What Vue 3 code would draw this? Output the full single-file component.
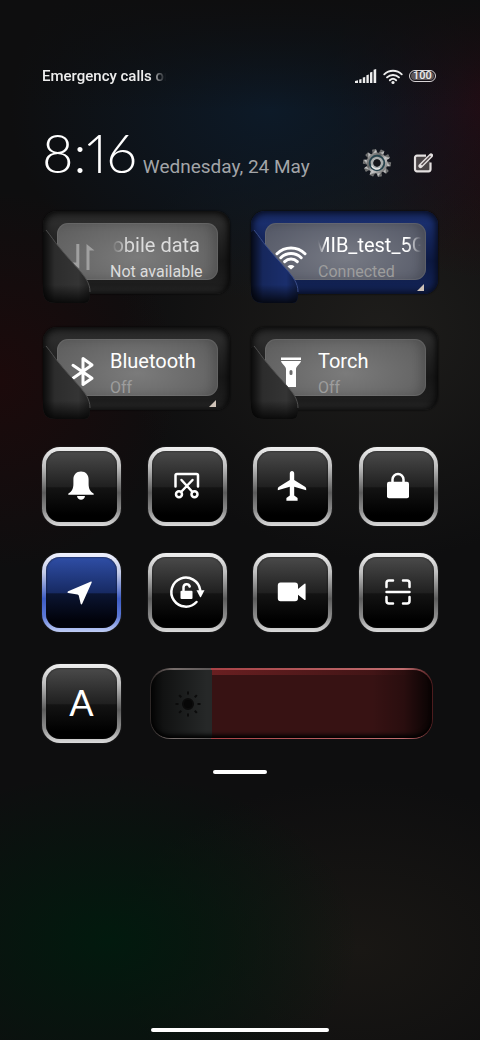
<template>
  <main class="control-center">
    <!-- Status bar -->
    <header class="status-bar">
      <span class="carrier">Emergency calls only</span>
      <div class="status-icons">
        <svg width="22" height="14" viewBox="0 0 22 14" role="img" aria-label="Signal">
          <path d="M0 12L3 11.2V14H0zM4.200 10.600L6.500 10V14H4.200zM7.800 8.600L10.200 8v6H7.800zM11.400 6.200L13.800 5.500V14h-2.400zM15 3.500L17.400 2.800V14H15zM18.600 .8L21.200 0v14h-2.600z" fill="#eee" />
        </svg>
        <svg width="20" height="15" viewBox="0 0 32 24" role="img" aria-label="Wi-Fi">
          <path d="M2 8.500a20 20 0 0 1 28 0M6.500 13.500a13.500 13.500 0 0 1 19 0M11 18a7.500 7.500 0 0 1 10 0" fill="none" stroke="#eee" stroke-width="3" stroke-linecap="round" />
          <circle cx="16" cy="21.500" r="2.500" fill="#eee" />
        </svg>
        <span class="battery"><span>100</span></span>
      </div>
    </header>

    <!-- Clock -->
    <section class="clock-row">
      <time class="clock">8:16</time>
      <span class="date">Wednesday, 24 May</span>
      <div class="actions">
        <button type="button" aria-label="Settings">
          <svg width="30" height="30" viewBox="-15 -15 30 30">
            <defs>
              <linearGradient id="steel" x1="0" y1="0" x2="1" y2="1">
                <stop offset="0" stop-color="#9a9a9a" />
                <stop offset="0.35" stop-color="#5f6060" />
                <stop offset="0.6" stop-color="#c9c9c9" />
                <stop offset="1" stop-color="#6d6d6d" />
              </linearGradient>
            </defs>
            <g fill="url(#steel)">
              <path v-for="n in 10" :key="n" d="M-2.600 -9L-1.900 -14H1.900L2.600 -9z" :transform="`rotate(${n * 36 - 12})`" />
            </g>
            <circle r="8.500" fill="none" stroke="url(#steel)" stroke-width="4" />
            <circle r="7.300" fill="none" stroke="#24424c" stroke-width="1.800" />
            <circle r="5" fill="none" stroke="#a9adad" stroke-width="2.600" />
            <path d="M-5.500 2.500A6 6 0 0 0 3 5.200" fill="none" stroke="#e8e8e8" stroke-width="1.500" />
            <circle r="3.400" fill="#15161a" />
          </svg>
        </button>
        <button type="button" aria-label="Edit">
          <svg width="20" height="20" viewBox="0 0 20 20">
            <path d="M17.500 9.500v6.800a2 2 0 0 1-2 2H4a2 2 0 0 1-2-2V4.600a2 2 0 0 1 2-2h9" fill="#4a4446" stroke="#e4e0e0" stroke-width="2.200" />
            <path d="M7.500 13L18 2.500" stroke="#e4e0e0" stroke-width="4.200" stroke-linecap="round" />
            <path d="M8.500 12L17.500 3" stroke="#55494c" stroke-width="1.500" />
          </svg>
        </button>
      </div>
    </section>

    <!-- Large tiles -->
    <section class="wide-grid">
      <button
        v-for="tile in wideTiles"
        :key="tile.id"
        type="button"
        class="wide-tile"
        :class="{ active: tile.active, muted: tile.muted }"
      >
        <span class="wide-body">
          <span class="panel">
            <svg class="wide-icon" width="32" height="32" viewBox="0 0 32 32">
              <path v-for="(s, i) in tile.icon" :key="i" :d="s.d" :class="s.line ? 'line' : 'solid'" />
            </svg>
            <span class="wide-text">
              <span class="title" :class="tile.scroll">{{ tile.title }}</span>
              <span class="state">{{ tile.state }}</span>
            </span>
          </span>
        </span>
        <svg class="flap" width="50" height="94" viewBox="0 0 50 94">
          <defs>
            <linearGradient :id="'side-' + tile.id" x1="0" y1="0" x2="1" y2="0">
              <stop offset="0" stop-color="#000" stop-opacity="0.800" />
              <stop offset="0.250" stop-color="#000" stop-opacity="0.150" />
              <stop offset="0.750" stop-color="#000" stop-opacity="0" />
              <stop offset="1" stop-color="#000" stop-opacity="0.400" />
            </linearGradient>
            <linearGradient :id="'fade-' + tile.id" x1="0" y1="0" x2="0" y2="1">
              <stop offset="0.750" stop-color="#000" stop-opacity="0" />
              <stop offset="1" stop-color="#000" stop-opacity="0.800" />
            </linearGradient>
          </defs>
          <path class="flap-base" :d="flapShape" />
          <path :d="flapShape" :fill="`url(#side-${tile.id})`" />
          <path :d="flapShape" :fill="`url(#fade-${tile.id})`" />
          <path class="flap-edge" d="M4 20C9 26 12 31 17 37C25 47 31 53 37 60C43 67 48 73 48 82" />
        </svg>
        <span v-if="tile.more" class="more"></span>
      </button>
    </section>

    <!-- Small toggles -->
    <section class="toggle-grid">
      <button
        v-for="item in toggles"
        :key="item.label"
        type="button"
        class="toggle"
        :class="{ active: item.active }"
        :aria-label="item.label"
      >
        <svg width="41" height="41" viewBox="0 0 41 41">
          <path v-for="(s, i) in item.icon" :key="i" :d="s.d" :class="s.line ? 'line' : 'solid'" />
        </svg>
      </button>
    </section>

    <!-- Brightness -->
    <section class="brightness-row">
      <button type="button" class="toggle auto" title="Automatic brightness">A</button>
      <label class="brightness">
        <input v-model="brightness" type="range" min="0" max="1000" aria-label="Brightness" :style="{ '--level': brightness / 10 + '%' }" />
        <svg class="sun" width="28" height="28" viewBox="-14 -14 28 28">
          <circle r="5" />
          <path v-for="n in 8" :key="n" d="M0 -9.500V-12.500" :transform="`rotate(${n * 45})`" />
        </svg>
      </label>
    </section>

    <div class="handle"></div>
    <div class="home-bar"></div>
  </main>
</template>

<script setup>
  import { ref } from 'vue'

  const brightness = ref(216)

  const flapShape = 'M4 20C9 26 12 31 17 37C25 47 31 53 37 60C43 67 48 73 48 82C48 88 48 93 42 93H14C5 93 1 89 1 80V22Z'

  const wideTiles = [
    {
      id: 'data',
      title: 'Mobile data',
      state: 'Not available',
      muted: true,
      scroll: 'scroll-start',
      icon: [
        { d: 'M9.300 3H12.300V27.500L4 21.500H9.300Z' },
        { d: 'M19.500 29V3L27.500 9.500H22.500V29Z' }
      ]
    },
    {
      id: 'wifi',
      title: 'MIB_test_5G',
      state: 'Connected',
      active: true,
      more: true,
      scroll: 'scroll-both',
      icon: [
        { d: 'M2 12.700A20 20 0 0 1 30 12.700M5.800 16.700A14.500 14.500 0 0 1 26.200 16.700M9.700 20.600A9 9 0 0 1 22.300 20.600', line: true },
        { d: 'M12.500 25.500A5 5 0 0 1 19.500 25.500L16 28.500Z' }
      ]
    },
    {
      id: 'bluetooth',
      title: 'Bluetooth',
      state: 'Off',
      more: true,
      icon: [{ d: 'M6 8.300L25 21.300L16 27.500V1.500L25 8L6 21.300', line: true }]
    },
    {
      id: 'torch',
      title: 'Torch',
      state: 'Off',
      icon: [{ d: 'M6 .5H26V3H6ZM6 4H26C25.500 7 21 9 21 12V30H11V12C11 9 6.500 7 6 4ZM16 13A1.500 1.500 0 0 0 14.500 14.500V16.500A1.500 1.500 0 0 0 17.500 16.500V14.500A1.500 1.500 0 0 0 16 13Z' }]
    }
  ]

  const toggles = [
    {
      label: 'Mute',
      icon: [
        { d: 'M20 5.500C24.800 5.500 27.600 8.800 27.600 13.500V18C27.600 23 29.500 25.500 32.500 27.500C33.200 28.200 33 28.700 32.200 28.700H7.800C7 28.700 6.800 28.200 7.500 27.500C10.500 25.500 12.400 23 12.400 18V13.500C12.400 8.800 15.200 5.500 20 5.500Z' },
        { d: 'M16 30H24C23.600 32.500 22 33.700 20 33.700C18 33.700 16.400 32.500 16 30Z' }
      ]
    },
    {
      label: 'Screenshot',
      icon: [
        { d: 'M8.500 20.500V9.500Q8.500 8 10 8H29.500Q31 8 31 9.500V20.500', line: true },
        { d: 'M14.500 14L25.500 26M25.500 14L14 26M15 28.300A3 3 0 1 1 9 28.300A3 3 0 1 1 15 28.300M30.500 28.300A3 3 0 1 1 24.500 28.300A3 3 0 1 1 30.500 28.300', line: true }
      ]
    },
    {
      label: 'Aeroplane mode',
      icon: [
        { d: 'M20 5C21.300 5 22.200 6 22.200 7.400V14L33 20.800C33.900 21.400 34.200 22 34.200 23V24.300L22.200 20.700V29.500L25.600 32V34.700H14.400V32L17.800 29.500V20.700L5.800 24.300V23C5.800 22 6.100 21.400 7 20.800L17.800 14V7.400C17.800 6 18.700 5 20 5Z' }
      ]
    },
    {
      label: 'Lock screen',
      icon: [
        { d: 'M11 15.700H29Q31 15.700 31 17.700V30.300Q31 32.300 29 32.300H11Q9 32.300 9 30.300V17.700Q9 15.700 11 15.700Z' },
        { d: 'M14.500 16V13.500A5.500 5.500 0 0 1 25.500 13.500V16', line: true }
      ]
    },
    {
      label: 'Location',
      active: true,
      icon: [
        { d: 'M29.500 9.700C30.500 9.300 31 9.800 30.600 10.800L21.200 31.800C20.700 32.800 19.900 32.700 19.600 31.600L17.800 23.800C17.600 23 17.200 22.700 16.500 22.500L7.300 21C6.200 20.800 6.200 19.800 7.200 19.300Z' }
      ]
    },
    {
      label: 'Rotation lock',
      icon: [
        { d: 'M33.200 18A14.500 14.500 0 1 0 29.500 30', line: true },
        { d: 'M29.500 18.200H37.500L34 25Q33.500 25.700 33 25Z' },
        { d: 'M14.500 18.800H24.500Q25.500 18.800 25.500 19.800V26Q25.500 27 24.500 27H14.500Q13.500 27 13.500 26V19.800Q13.500 18.800 14.500 18.800Z' },
        { d: 'M16.500 18.500V15A3.200 3.200 0 0 1 22.700 14.500', line: true }
      ]
    },
    {
      label: 'Screen recorder',
      icon: [
        { d: 'M8.500 10.500H23Q26 10.500 26 13.500V17L32.500 11.800Q33.600 11.200 33.600 12.500V27.200Q33.600 28.500 32.500 27.900L26 22.700V26.200Q26 29.200 23 29.200H8.500Q5.800 29.200 5.800 26.200V13.500Q5.800 10.500 8.500 10.500Z' }
      ]
    },
    {
      label: 'Scanner',
      icon: [
        { d: 'M8.500 15V11Q8.500 8.500 11 8.500H15M25 8.500H29Q31.500 8.500 31.500 11V15M8.500 25V29Q8.500 31.500 11 31.500H15M25 31.500H29Q31.500 31.500 31.500 29V25M8.500 20H31.500', line: true }
      ]
    }
  ]
</script>

<style>
  body {
    background: #0e0e0f;
  }
</style>

<style scoped>
  * {
    box-sizing: border-box;
  }

  .control-center {
    min-height: 100vh;
    padding: 66px 42px 8px;
    display: flex;
    flex-direction: column;
    font-family: Roboto, "Liberation Sans", sans-serif;
    color: #fff;
    background:
      linear-gradient(#0e0e0f 0, rgba(14, 14, 15, 0) 110px),
      radial-gradient(ellipse 260px 190px at 270px 110px, #0d1a28, rgba(13, 26, 40, 0)),
      radial-gradient(ellipse 150px 190px at 100% 90px, #260a10, rgba(38, 10, 16, 0)),
      radial-gradient(ellipse 180px 190px at 0 380px, #1c0a0b, rgba(28, 10, 11, 0)),
      radial-gradient(ellipse 260px 230px at 380px 330px, #1e1d1b, rgba(30, 29, 27, 0)),
      radial-gradient(ellipse 250px 170px at 110px 940px, #021a0e, rgba(2, 26, 14, 0)),
      radial-gradient(ellipse 250px 170px at 360px 950px, #191714, rgba(25, 23, 20, 0)),
      #0e0e0f;
  }

  button {
    margin: 0;
    padding: 0;
    border: 0;
    background: none;
    color: inherit;
    font: inherit;
    cursor: pointer;
  }

  /* Status bar */
  .status-bar {
    display: flex;
    align-items: center;
    justify-content: space-between;
    height: 20px;
  }

  .carrier {
    width: 124px;
    overflow: hidden;
    white-space: nowrap;
    font-size: 15px;
    font-weight: 500;
    color: #eee;
    -webkit-mask-image: linear-gradient(90deg, #000 108px, transparent 124px);
    mask-image: linear-gradient(90deg, #000 108px, transparent 124px);
  }

  .status-icons {
    display: flex;
    align-items: center;
    gap: 6px;
    padding-right: 2px;
  }

  .battery {
    width: 27px;
    height: 12px;
    padding: 1px;
    border: 1px solid #d8d4d6;
    border-radius: 6px;
    display: flex;
  }

  .battery span {
    flex: 1;
    border-radius: 4px;
    background: #5c5557;
    font-size: 11px;
    line-height: 8px;
    font-weight: 500;
    text-align: center;
    color: #eee;
  }

  /* Clock */
  .clock-row {
    display: flex;
    align-items: baseline;
    height: 60px;
    margin: 37px 0 27px;
  }

  .clock {
    font-family: Lato, sans-serif;
    font-size: 54px;
    line-height: 60px;
    font-weight: 300;
    font-variant-numeric: proportional-nums;
  }

  .date {
    margin-left: 6px;
    font-size: 19px;
    color: #a3a5a8;
    white-space: nowrap;
  }

  .actions {
    display: flex;
    align-items: center;
    align-self: flex-end;
    gap: 21px;
    height: 40px;
    margin-left: auto;
    padding-right: 5px;
  }

  .actions button,
  .actions svg {
    display: block;
  }

  /* Large tiles */
  .wide-grid {
    display: grid;
    grid-template-columns: repeat(2, minmax(0, 1fr));
    gap: 22px 20px;
  }

  .wide-tile {
    position: relative;
    height: 94px;
    padding: 1px 0 10px 1px;
    text-align: left;
  }

  .wide-body {
    display: block;
    height: 83px;
    padding: 12px 12px 14px 14px;
    border-radius: 14px;
    background: linear-gradient(#2a2a2a, #2c2c2c 15%, #181818 60%, #1e1e1e 90%, #333);
    box-shadow: inset 0 0 7px 2px #060606, 0 0 2px #000;
  }

  .panel {
    display: flex;
    gap: 11px;
    height: 57px;
    padding: 0 5px 0 10px;
    border-radius: 11px;
    background: radial-gradient(ellipse 60% 80% at 50% 60%, #7b7b7b, #5f5f5f);
    box-shadow: inset 0 0 0 1px rgba(150, 150, 150, 0.2), inset -6px 0 8px rgba(0, 0, 0, 0.15);
  }

  .active .wide-body {
    background: linear-gradient(#182b66, #1a2e6c 15%, #0d1a44 60%, #142558);
    box-shadow: inset 0 0 7px 2px #060a1a, 0 0 2px #000;
  }

  .active .panel {
    background: radial-gradient(ellipse 60% 80% at 50% 60%, #777a84, #565a68);
  }

  .wide-icon {
    flex: none;
    margin-top: 18px;
  }

  .line {
    fill: none;
    stroke: #fff;
    stroke-width: 3;
    stroke-linecap: round;
    stroke-linejoin: round;
  }

  .solid {
    fill: #fff;
    fill-rule: evenodd;
  }

  .muted .solid {
    fill: #a0a0a0;
  }

  .wide-text {
    flex: 1;
    min-width: 0;
    padding-top: 9px;
    line-height: 26px;
    white-space: nowrap;
  }

  .title,
  .state {
    display: block;
    overflow: hidden;
  }

  .title {
    font-size: 20px;
  }

  .state {
    font-size: 16px;
    line-height: 28px;
    color: #9d9d9d;
  }

  .muted .title,
  .muted .state {
    color: #dcdcdc;
  }

  .scroll-start {
    text-indent: -15px;
    -webkit-mask-image: linear-gradient(90deg, transparent 2px, #000 18px);
    mask-image: linear-gradient(90deg, transparent 2px, #000 18px);
  }

  .scroll-both {
    text-indent: -5px;
    -webkit-mask-image: linear-gradient(90deg, transparent, #000 8px calc(100% - 14px), transparent);
    mask-image: linear-gradient(90deg, transparent, #000 8px calc(100% - 14px), transparent);
  }

  .flap {
    position: absolute;
    left: 0;
    top: 0;
  }

  .flap-base {
    fill: #343434;
  }

  .flap-edge {
    fill: none;
    stroke: #4e4e4e;
  }

  .active .flap-base {
    fill: #1a2e6c;
  }

  .active .flap-edge {
    stroke: #3a4d88;
  }

  .more {
    position: absolute;
    right: 14px;
    bottom: 13px;
    width: 7px;
    height: 7px;
    background: #cfc3b8;
    clip-path: polygon(100% 0, 100% 100%, 0 100%);
  }

  /* Small toggles */
  .toggle-grid {
    display: grid;
    grid-template-columns: repeat(4, 79px);
    justify-content: space-between;
    gap: 27px 0;
    margin-top: 27px;
  }

  .toggle {
    display: flex;
    align-items: center;
    justify-content: center;
    width: 79px;
    height: 79px;
    border: 4px solid transparent;
    border-radius: 18px;
    background:
      linear-gradient(#4a4a4a, #202020 50%, #131313 52%, #000 90%) padding-box,
      linear-gradient(#f0f0f0, #bdbdbd 25%, #5c5c5c 58%, #8a8a8a 80%, #dcdcdc) border-box;
    box-shadow: inset 0 0 2px #111, 0 0 2px #333;
  }

  .toggle.active {
    background:
      linear-gradient(#2f4ea6, #172a63 50%, #0b1532 52%, #01020a 90%) padding-box,
      linear-gradient(#f0f2ff, #c3cbe8 25%, #3d5cc4 58%, #5b78d8 80%, #c0cdf5) border-box;
  }

  .toggle .line {
    stroke-width: 2.5;
  }

  /* Brightness */
  .brightness-row {
    display: flex;
    align-items: center;
    gap: 29px;
    margin-top: 32px;
    padding-right: 5px;
  }

  .auto {
    flex: none;
    padding-bottom: 4px;
    font-family: Lato, sans-serif;
    font-size: 36px;
    line-height: 36px;
  }

  .brightness {
    position: relative;
    flex: 1;
    height: 71px;
  }

  .brightness input {
    display: block;
    width: 100%;
    height: 71px;
    margin: 0;
    border: 1px solid transparent;
    border-top-width: 2px;
    border-radius: 20px;
    appearance: none;
    -webkit-appearance: none;
    background:
      linear-gradient(90deg, rgba(0, 0, 0, 0.900), rgba(0, 0, 0, 0.550) 12px, transparent 56px calc(100% - 60px), rgba(0, 0, 0, 0.250) calc(100% - 28px), rgba(0, 0, 0, 0.850)) padding-box,
      linear-gradient(90deg, transparent var(--level), rgba(255, 70, 75, 0.250) var(--level), transparent calc(100% - 12px)) top / 100% 5px no-repeat padding-box,
      linear-gradient(90deg, #262828 var(--level), #371213 var(--level)) padding-box,
      linear-gradient(90deg, #2c2625, #776e6c 24px, #5c5757 var(--level), #a84246 var(--level), #c06e70 calc(100% - 30px), #4a1a1c) border-box;
    box-shadow: inset 0 -4px 4px -1px #000;
  }

  .brightness input::-webkit-slider-thumb {
    -webkit-appearance: none;
    width: 1px;
    height: 60px;
  }

  .sun {
    position: absolute;
    left: 24px;
    top: 22px;
    fill: #070707;
    stroke: #0b0b0b;
    stroke-width: 2;
    pointer-events: none;
  }

  .handle {
    width: 54px;
    height: 4px;
    margin: 27px auto 0;
    border-radius: 2px;
    background: #fff;
  }

  .home-bar {
    width: 178px;
    height: 4px;
    margin: auto auto 0;
    border-radius: 2px;
    background: #fff;
  }
</style>
